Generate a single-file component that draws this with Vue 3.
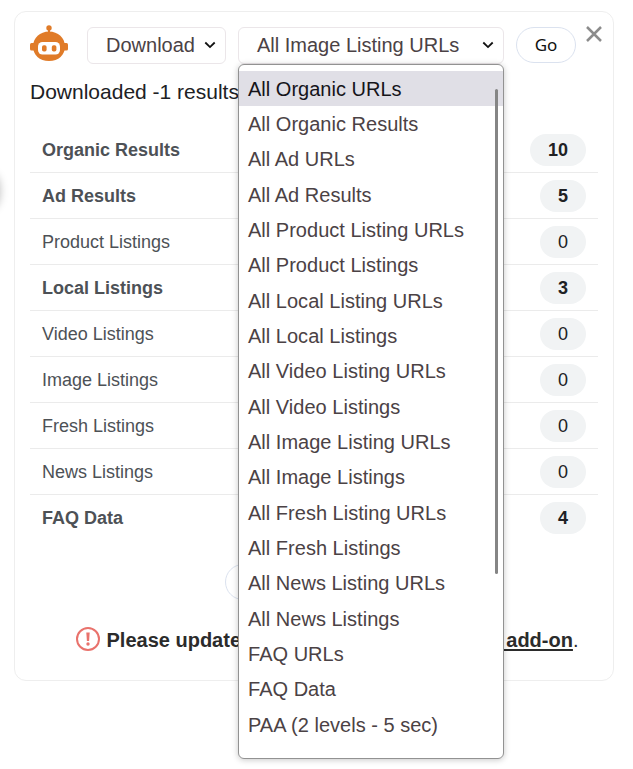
<script setup>
const rows = [
  { name: 'Organic Results', count: 10 },
  { name: 'Ad Results', count: 5 },
  { name: 'Product Listings', count: 0 },
  { name: 'Local Listings', count: 3 },
  { name: 'Video Listings', count: 0 },
  { name: 'Image Listings', count: 0 },
  { name: 'Fresh Listings', count: 0 },
  { name: 'News Listings', count: 0 },
  { name: 'FAQ Data', count: 4 },
]
const options = [
  'All Organic URLs', 'All Organic Results', 'All Ad URLs', 'All Ad Results',
  'All Product Listing URLs', 'All Product Listings', 'All Local Listing URLs',
  'All Local Listings', 'All Video Listing URLs', 'All Video Listings',
  'All Image Listing URLs', 'All Image Listings', 'All Fresh Listing URLs',
  'All Fresh Listings', 'All News Listing URLs', 'All News Listings',
  'FAQ URLs', 'FAQ Data', 'PAA (2 levels - 5 sec)',
]
</script>

<template>
  <div class="page">
    <div class="edge-button"></div>
    <section class="card">
      <header class="toolbar">
        <svg class="robot" width="38" height="37" viewBox="0 0 38 37">
          <g fill="#e07b28">
            <circle cx="19" cy="3" r="2.700" />
            <path d="M18 4h2v5h-2z" />
            <rect x="0" y="18" width="38" height="7.500" rx="1.500" />
            <path d="M19 6.500C10 6.500 3 13 3 21.500S9.500 36 19 36 35 30 35 21.500 28 6.500 19 6.500z" />
          </g>
          <rect x="8" y="17" width="22" height="12.500" rx="4.500" fill="#fff" />
          <rect x="12" y="20.200" width="4.600" height="6.300" rx="1.800" fill="#e07b28" />
          <rect x="21.800" y="20.200" width="4.600" height="6.300" rx="1.800" fill="#e07b28" />
        </svg>
        <div class="select action">
          <span>Download</span>
          <svg width="12" height="8" viewBox="0 0 12 8"><path d="M1.300 1.500 6 6.100l4.700-4.600" /></svg>
        </div>
        <div class="select kind">
          <span>All Image Listing URLs</span>
          <svg width="12" height="8" viewBox="0 0 12 8"><path d="M1.300 1.500 6 6.100l4.700-4.600" /></svg>
          <div class="menu">
            <div v-for="(o, i) in options" :key="o" class="option" :class="{ active: i === 0 }"><span>{{ o }}</span></div>
            <div class="thumb"></div>
          </div>
        </div>
        <button class="go">Go</button>
        <svg class="close" width="16" height="16" viewBox="0 0 16 16"><path d="M1 1l14 14M15 1l-14 14" /></svg>
      </header>
      <p class="status">Downloaded -1 results</p>
      <div class="rows">
        <div v-for="r in rows" :key="r.name" class="row" :class="{ filled: r.count > 0 }">
          <span class="name">{{ r.name }}</span>
          <span class="pill">{{ r.count }}</span>
        </div>
      </div>
      <button class="more"></button>
      <div class="notice">
        <svg width="24" height="24" viewBox="0 0 24 24">
          <circle cx="12" cy="12" r="11" fill="none" stroke="#e9726c" stroke-width="2" />
          <path d="M10.300 5.500h3.400l-.6 8.500h-2.200z" fill="#e9726c" />
          <circle cx="12" cy="17" r="1.700" fill="#e9726c" />
        </svg>
        <b class="lead">Please update</b>
        <span class="tail"><u>&nbsp;add-on</u>.</span>
      </div>
    </section>
  </div>
</template>

<style>
body { background: #fff; }
</style>

<style scoped>
.page {
  position: relative;
  box-sizing: border-box;
  height: 769px;
  padding: 11px 19px 0 14px;
  overflow: hidden;
  font-family: "Liberation Sans", Arial, sans-serif;
}
.edge-button {
  position: absolute;
  left: -38px;
  top: 168px;
  width: 38px;
  height: 44px;
  border-radius: 22px;
  box-shadow: 0 1px 9px rgba(0, 0, 0, .25);
}
.card {
  box-sizing: border-box;
  width: 600px;
  height: 670px;
  padding: 13px 15px 0;
  border: 1px solid #eee;
  border-radius: 12px;
}
.toolbar { display: flex; align-items: flex-start; height: 52px; }
.toolbar > * { flex: none; }
.select {
  position: relative;
  display: flex;
  align-items: center;
  justify-content: space-between;
  box-sizing: border-box;
  height: 37px;
  margin-top: 2px;
  padding: 0 9px 1px 18px;
  border: 1px solid #ebe6e9;
  border-radius: 6px;
  color: #4b4245;
  font-size: 20px;
  white-space: nowrap;
}
.select > svg { fill: none; stroke: #111; stroke-width: 1.800; }
.action { width: 139px; margin-left: 19px; }
.kind { width: 266px; margin-left: 12px; }
.go {
  box-sizing: border-box;
  width: 60px;
  height: 36px;
  margin: 2px 0 0 12px;
  padding: 0 0 1px;
  border: 1px solid #dbe2ef;
  border-radius: 18px;
  background: #fff;
  color: #111;
  font: 17px "Noto Sans", sans-serif;
}
.close { margin: 1px 0 0 9.500px; fill: none; stroke: #8c8c8c; stroke-width: 2.500; }
.status { margin: 0; padding-top: 3px; font-size: 21px; line-height: 24px; color: #202124; height: 46px; box-sizing: border-box; }
.rows { width: 568px; padding-top: 4px; }
.row {
  display: flex;
  align-items: center;
  justify-content: space-between;
  box-sizing: border-box;
  height: 46px;
  padding: 0 12px;
  border-bottom: 1px solid #ebebeb;
  color: #4d5156;
  font-size: 18px;
}
.row:last-child { border-bottom-color: transparent; }
.name { padding-top: 1px; }
.filled { font-weight: bold; }
.pill {
  padding: 0 18px;
  border-radius: 16px;
  background: #f1f3f4;
  color: #202124;
  font-size: 18px;
  line-height: 32px;
}
.more {
  display: block;
  width: 150px;
  height: 36px;
  margin: 23px 0 0 195px;
  border: 1px solid #dbe2ef;
  border-radius: 18px;
  background: #fff;
}
.notice { display: flex; align-items: flex-start; padding: 27px 19.500px 0 46px; font-size: 20px; color: #2b2b2b; line-height: 26px; }
.lead { margin-left: 6.500px; }
.tail { margin-left: auto; }
.tail u { font-weight: bold; text-decoration: underline; text-decoration-thickness: 2px; text-underline-offset: 2px; }
.menu {
  position: absolute;
  z-index: 2;
  left: -1px;
  top: 36px;
  box-sizing: border-box;
  width: 266px;
  height: 695px;
  padding-top: 6px;
  border: 1px solid #929292;
  border-radius: 6px;
  background: #fff;
  box-shadow: 0 1px 6px rgba(0, 0, 0, .22);
}
.option { box-sizing: border-box; height: 35.340px; padding: .7px 0 0 9px; line-height: 35.340px; letter-spacing: .015px; }
.active { background: #e0dfe6; color: #15141a; }
.thumb { position: absolute; right: 5px; top: 24px; width: 3px; height: 485px; border-radius: 2px; background: #858585; }
</style>
